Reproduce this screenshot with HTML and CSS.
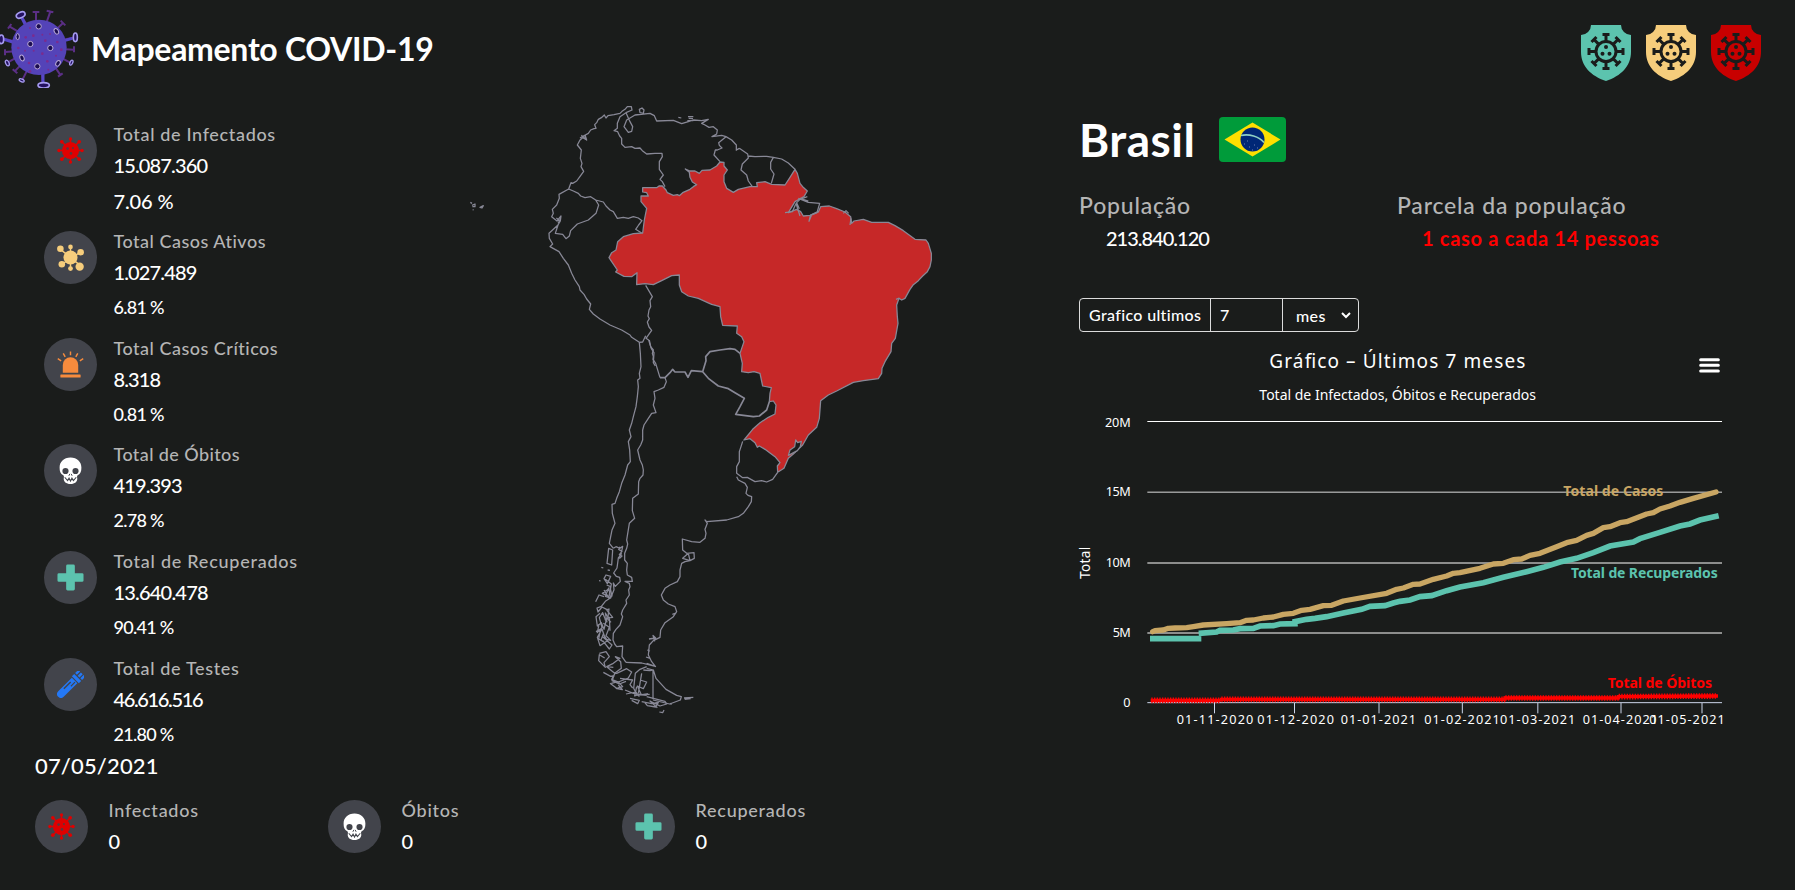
FILE: index.html
```html
<!DOCTYPE html>
<html lang="pt-br">
<head>
<meta charset="utf-8">
<title>Mapeamento COVID-19</title>
<link rel="stylesheet" href="styles.css">
</head>
<body>
<svg class="defs" width="0" height="0">
  <symbol id="i-virus" viewBox="0 0 28 28">
    <g stroke="#e00000" fill="#e00000"><path fill="none" stroke-width="1.5" d="M14 1v26M1 14h26M4.5 4.5l19 19M4.500 23.500l19-19"/><circle cx="14" cy="14" r="8.900" stroke="none"/><g stroke="none"><circle cx="14" cy="2" r="1.700"/><circle cx="14" cy="26" r="1.700"/><circle cx="2" cy="14" r="1.700"/><circle cx="26" cy="14" r="1.700"/><circle cx="5" cy="5" r="1.900"/><circle cx="23" cy="5" r="1.900"/><circle cx="5" cy="23" r="1.900"/><circle cx="23" cy="23" r="1.900"/></g></g>
    <g fill="#5e363c"><circle cx="11" cy="12" r="1.400"/><circle cx="16.500" cy="11.500" r="1.100"/><circle cx="14.500" cy="17" r="1.400"/></g>
  </symbol>
  <symbol id="i-active" viewBox="0 0 28 28">
    <g fill="#f6cd7c" stroke="#f6cd7c" stroke-width="1.500"><path d="M14 3v22M3 5l22 18M25 8L5 21"/><g stroke="none"><circle cx="14" cy="14" r="7.300"/><circle cx="14" cy="3" r="2.400"/><circle cx="14" cy="25.500" r="2.500"/><circle cx="3.500" cy="5" r="3.400"/><circle cx="24.500" cy="8.500" r="3.400"/><circle cx="5" cy="21" r="3.400"/><circle cx="23.500" cy="23.500" r="4.300"/></g></g>
  </symbol>
  <symbol id="i-siren" viewBox="0 0 28 28">
    <g fill="#f78b3d"><path d="M6 22.500v-8a8 8 0 0 1 16 0v8z"/><rect x="3.500" y="24.300" width="21" height="3.200" rx=".6"/></g><path d="M14 .5v4M6.500 2.500l2 3.500M21.500 2.500l-2 3.500M.8 8l3.500 2.200M27.200 8l-3.500 2.200" stroke="#f78b3d" stroke-width="1.500" fill="none"/>
  </symbol>
  <symbol id="i-skull" viewBox="0 0 28 28">
    <path fill="#fff" d="M14 .5C7 .5 2.700 5 2.700 11c0 4 .8 6.500 3.800 8 .8.500.8 1.500.5 3-.4 3.500 2.500 6 7 6s7.400-2.500 7-6c-.3-1.500-.3-2.500.5-3 3-1.500 3.800-4 3.800-8C25.300 5 21 .5 14 .5z"/><g fill="#42444b"><circle cx="8.800" cy="14.500" r="3.200"/><circle cx="19.200" cy="14.500" r="3.200"/><path d="M13.300 17.500l-1 2M14.700 17.500l1 2" stroke="#42444b"/></g><path d="M8 21l3 3.500 1.500-2.500 1.500 3 1.500-3 1.500 2.500L20 21" fill="none" stroke="#42444b" stroke-width="1.100"/>
  </symbol>
  <symbol id="i-plus" viewBox="0 0 28 28"><path fill="#5cc3ae" d="M11 .5h6a1.500 1.500 0 0 1 1.500 1.500v7.500H26a1.500 1.500 0 0 1 1.500 1.500v6a1.500 1.500 0 0 1-1.500 1.500h-7.500V26a1.500 1.500 0 0 1-1.500 1.500h-6A1.500 1.500 0 0 1 9.500 26v-7.500H2A1.500 1.500 0 0 1 .5 17v-6A1.500 1.500 0 0 1 2 9.500h7.500V2A1.500 1.500 0 0 1 11 .5z"/></symbol>
  <symbol id="i-tube" viewBox="0 0 28 28">
    <g transform="rotate(45 14 14)" fill="#2478f5"><path d="M10 8h8v20a4 4 0 0 1-8 0z"/><path d="M9 3.500h10.200V7H9z"/><path d="M9-2.500h2.600v4.700H9zM12.800-2.500h2.600v4.700h-2.600zM16.600-2.500h2.600v4.700h-2.600z"/><path d="M15 9v6h1.200V9zM11.500 12h1.500v10h-1.500z" fill="#42444b"/></g>
  </symbol>
  <symbol id="i-shield" viewBox="0 0 50 56">
    <path fill="currentColor" d="M10 0h30a10 10 0 0 0 10 10v17C50 41 40 51 25 56 10 51 0 41 0 27V10A10 10 0 0 0 10 0z"/>
    <g fill="none" stroke="#1a1c1b" stroke-width="3"><circle cx="25" cy="26.500" r="10"/><path d="M25 16.500v-7M21.500 9.500h7M25 36.500v7M21.500 43.500h7M15 26.500H8M8 23v7M35 26.500h7M42 23v7"/><path transform="rotate(45 25 26.500)" d="M25 16.500v-7M21.500 9.500h7M25 36.500v7M21.500 43.500h7M15 26.500H8M8 23v7M35 26.500h7M42 23v7"/></g>
    <g fill="#1a1c1b"><circle cx="25" cy="22" r="2"/><circle cx="21.500" cy="28.800" r="2"/><circle cx="28.500" cy="28.800" r="2"/></g>
  </symbol>
</svg>

<header class="top">
  <svg class="logo" viewBox="0 0 240 240">
    <g stroke="#5b2f86" stroke-width="6" fill="none"><path d="M120 110L62 22M108 10v90M98 12h20M120 100L152 8M140 8l20 5M120 110L190 44M182 38l14 14M120 110L226 88M125 120l97 5M222 115v18M120 115l96 52M120 110l62 92M174 206l14-10M120 110l8 122M120 110L66 218M120 110L44 190M38 184l14 12M120 110L22 164M110 125l-95 7M15 124v18M120 120L4 90M120 110L28 55M24 62l10-14"/></g>
    <g stroke="#5647c8" stroke-width="9"><path d="M76 50L66 30M193 98l24-7M38 102L12 94M129 190v35"/></g>
    <circle cx="117" cy="118" r="83" fill="#5443b8"/>
    <g fill="#241160" stroke="#a69bf0" stroke-width="5"><ellipse cx="62" cy="21" rx="14" ry="8" transform="rotate(-25 62 21)"/><ellipse cx="226" cy="88" rx="6" ry="13"/><ellipse cx="4" cy="94" rx="7" ry="13"/><ellipse cx="131" cy="232" rx="17" ry="8"/><ellipse cx="22" cy="165" rx="5" ry="9" stroke-width="4" transform="rotate(-25 22 165)"/><ellipse cx="214" cy="164" rx="4" ry="8" stroke-width="4" transform="rotate(25 214 164)"/><ellipse cx="65" cy="217" rx="8" ry="4" stroke-width="4" transform="rotate(25 65 217)"/></g>
    <g fill="#1a0d50" stroke="#b9a8d6" stroke-width="3"><circle cx="116" cy="55" r="8"/><ellipse cx="169" cy="70" rx="6" ry="9" transform="rotate(-30 169 70)"/><ellipse cx="53" cy="86" rx="5" ry="9"/><circle cx="91" cy="108" r="8"/><circle cx="151" cy="120" r="8"/><ellipse cx="66" cy="150" rx="6" ry="9" transform="rotate(-25 66 150)"/><circle cx="112" cy="175" r="8"/><ellipse cx="174" cy="166" rx="6" ry="9" transform="rotate(30 174 166)"/></g>
    <g fill="#7b2b8e"><circle cx="90" cy="60" r="3"/><circle cx="100" cy="83" r="4"/><circle cx="127" cy="80" r="3"/><circle cx="150" cy="78" r="3"/><circle cx="136" cy="98" r="4"/><circle cx="77" cy="88" r="4"/><circle cx="172" cy="102" r="4"/><circle cx="55" cy="120" r="4"/><circle cx="101" cy="128" r="3"/><circle cx="127" cy="137" r="4"/><circle cx="87" cy="165" r="4"/><circle cx="90" cy="190" r="4"/><circle cx="142" cy="160" r="4"/><circle cx="168" cy="143" r="3"/><circle cx="145" cy="185" r="3"/><circle cx="184" cy="125" r="4"/><circle cx="75" cy="128" r="3"/></g>
  </svg>
  <h1>Mapeamento COVID-19</h1>
  <div class="shields">
    <svg class="green"><use href="#i-shield"/></svg>
    <svg class="yellow"><use href="#i-shield"/></svg>
    <svg class="red"><use href="#i-shield"/></svg>
  </div>
</header>

<main class="content">
  <ul class="stats">
    <li class="infected"><span class="badge"><svg><use href="#i-virus"/></svg></span><div><p class="label">Total de Infectados</p><p class="value">15.087.360</p><p class="pct first">7.06 %</p></div></li>
    <li class="active"><span class="badge"><svg><use href="#i-active"/></svg></span><div><p class="label">Total Casos Ativos</p><p class="value">1.027.489</p><p class="pct">6.81 %</p></div></li>
    <li class="critical"><span class="badge"><svg><use href="#i-siren"/></svg></span><div><p class="label">Total Casos Críticos</p><p class="value">8.318</p><p class="pct">0.81 %</p></div></li>
    <li class="deaths"><span class="badge"><svg><use href="#i-skull"/></svg></span><div><p class="label">Total de Óbitos</p><p class="value">419.393</p><p class="pct">2.78 %</p></div></li>
    <li class="recovered"><span class="badge"><svg><use href="#i-plus"/></svg></span><div><p class="label">Total de Recuperados</p><p class="value">13.640.478</p><p class="pct">90.41 %</p></div></li>
    <li class="tests"><span class="badge"><svg><use href="#i-tube"/></svg></span><div><p class="label">Total de Testes</p><p class="value">46.616.516</p><p class="pct">21.80 %</p></div></li>
  </ul>

  <svg class="map" viewBox="0 0 1500 1920">
    <g class="land">
      <!-- Brasil -->
      <path class="sel" d="M548 293L590 293 597 288 607 288 618 300 622 308 640 316 652 314 658 317 668 308 690 298 700 290 710 284 697 276 690 262 688 247 676 237 690 243 705 243 718 250 726 241 750 240 770 228 780 216 792 217 792 228 802 240 792 255 792 275 800 295 820 307 835 298 870 290 892 290 890 278 915 275 935 283 975 285 990 262 1005 238 1012 250 1020 280 1028 290 1042 303 1032 320 1005 335 985 368 1010 358 1022 365 1030 378 1050 376 1075 366 1082 350 1108 348 1130 356 1155 366 1172 380 1175 400 1182 393 1210 388 1235 397 1285 397 1305 407 1330 422 1365 448 1398 450 1405 460 1414 490 1414 510 1410 530 1402 545 1388 558 1375 572 1360 584 1350 598 1335 625 1325 630 1317 625 1310 645 1312 680 1314 700 1306 745 1295 760 1293 785 1275 815 1266 835 1265 850 1255 866 1210 872 1180 877 1130 903 1105 915 1082 932 1078 985 1070 1012 1045 1035 1028 1065 1000 1092 985 1105 972 1135 953 1147 952 1128 960 1118 945 1100 915 1078 898 1068 892 1072 885 1058 870 1046 852 1050 878 1018 900 998 925 982 945 972 948 945 940 933 928 935 930 910 934 893 908 888 900 850 882 845 865 848 845 845 847 820 840 790 852 755 845 740 830 730 832 708 788 706 782 680 780 650 755 643 748 640 715 625 685 618 665 605 658 585 658 555 635 557 605 572 580 584 555 581 530 584 531 548 515 560 492 559 467 546 472 540 455 515 447 503 455 488 468 480 473 455 490 440 520 431 548 429 553 390 560 355 543 335 543 318 565 318 560 308 548 306z"/>
      <path d="M1042 320L1020 328 1008 340 1020 378M1015 325l30 12 34 3-8 28-20 8-4 18 8-20 20-10M975 368l22-3 10-22M1010 338l8 18M1020 325l25 8M1150 370l8-8 8 8M1170 405l3-20M1308 628l10-4"/>
      <path class="lagoon" d="M985 1096L990 1080 1004 1070 1007 1050 1013 1058 1024 1054 1021 1070 1012 1082z"/>
      <!-- Colômbia, Venezuela e Guianas -->
      <path d="M326 297L333 278 338 280 350 273 358 262 371 244 363 230 366 220 361 205 364 180 352 165 360 150 368 143 378 148 376 135 385 130 392 120 402 116 408 115 404 104 410 98 415 88 424 83 433 75 438 84 444 77 462 74 480 70 486 64 495 58 502 50 514 50 516 60 498 68 480 80 472 100 472 115 462 122 473 125 479 138 485 145 485 162 495 172 515 170 525 175 540 174 547 182 560 192 585 190 606 190 607 200 598 215 598 238 610 255 600 268 607 275 615 290"/>
      <path d="M364 136l16 14-6-14-14 8M498 68L510 95 518 110 515 124 505 127 492 110 500 90 525 75 570 70 583 77 590 93 640 91 665 101 685 95 700 90 725 92 745 88 725 100 735 105 747 112 760 110 772 120 770 132 756 140 785 136 798 140 815 150 829 165 829 182M838 175l25 17 2 12-18 18 -4 18 17 15 5 18 12 17M829 180l9-5M865 198l20 2 35-1 20 3 25 5 20 12 20 19M940 202l-8 15 0 20 10 15-8 28M798 140l-22 18 2 8 8 8-14 6-6 0-4 15 18 20M538 58l8-4 6 6-2 10-10-2zM655 82l9 2M684 80l16 0M686 85l13 1M682 92l18 0"/>
      <!-- Equador e Peru -->
      <path d="M326 297L297 313 298 325 290 345 277 358 280 370 275 380 291 393 303 378 301 393 294 405 286 430 308 433 318 446 328 438 332 422 352 402 385 390 408 370 416 345 407 330 392 320 375 323 362 318 355 310 340 303 326 297M407 330L430 336 438 348 450 360 460 365 472 385 490 382 505 385 520 380 535 384 546 392 536 405 527 418 545 429M294 405L267 430 268 445 278 462 270 470 297 485 310 505 325 525 335 550 345 570 358 590 360 600 372 613 380 627 392 642 388 658 400 672 420 687 450 705 485 720 510 735 515 742 538 757 548 756 557 737M557 586l20 34-7 12 2 18-5 10 -3 18 4 8-6 10 5 15 8 10-17 24 8 5 8 26 8 12-2 30 6 10M289 393l11-3-6 10M289 384l12 8"/>
      <!-- Bolívia, Paraguai e Uruguai -->
      <path class="thick" d="M600 863L615 863 630 848 638 838 645 846 675 846 684 862 694 842 728 845 738 812 737 800 750 785 780 780 810 776 825 778 840 790M728 845L745 865 775 888 805 896 825 908 853 925 840 950 827 973 880 980 898 978 920 960 928 935"/>
      <path d="M568 750L572 770 580 780 577 790 580 800 579 808 587 820 600 863M848 1054L843 1070 838 1085 838 1115 830 1130 830 1150 848 1163 862 1162 885 1175 905 1172 920 1176 938 1168 953 1147"/>
      <!-- Chile -->
      <path d="M538 757L541 790 543 830 538 850 540 865 533 870 535 890 532 920 528 950 520 980 515 1000 508 1020 513 1040 505 1055 509 1080 511 1115 503 1125 495 1155 485 1180 478 1205 470 1225 465 1240 456 1243 457 1270 465 1300 456 1320 452 1340 448 1360 460 1375M615 863L619 875 612 892 595 900 582 905 585 925 580 945 588 968 575 970 565 985 552 1005 548 1020 548 1050 542 1065 533 1080 540 1110 547 1125 550 1140 549 1155 540 1165 536 1175 535 1212 518 1225 517 1262 524 1285 508 1300 500 1350 503 1362 500 1375 494 1390 494 1410 502 1420 500 1440 502 1455 515 1462 517 1474 495 1474 508 1480 510 1490 506 1500 508 1515 498 1530 500 1540 488 1560 484 1572 488 1580 480 1605 468 1618 460 1630 459 1650 464 1662 470 1670 488 1668 486 1700 498 1717"/>
      <!-- costa argentina -->
      <path d="M830 1160L835 1170 855 1180 862 1192 858 1210 864 1216 875 1220 874 1235 865 1250 850 1270 835 1280 800 1290 740 1295 735 1290 742 1300 735 1318 738 1330 735 1345 720 1357 695 1355 667 1347 668 1380 680 1390 702 1388 703 1405 690 1412 668 1405 685 1390 690 1412 675 1415 665 1420 660 1440 660 1460 652 1475 630 1485 615 1495 604 1515 610 1530 625 1542 645 1550 650 1565 640 1580 615 1598 602 1620 600 1642 580 1652 568 1665 565 1695 575 1715 586 1729 565 1724 545 1719 498 1717M567 1647l20-3-8-8 5 18M560 1720l28 10M645 1570l-8 3M558 1701l12 4M562 1680l8 3"/>
      <!-- Patagônia e Terra do Fogo -->
      <path d="M579 1742V1828M560 1730l-20 8-14 12-5 45 10 20 38-2M550 1740l20 2 10-2 8 25 30 33 32 18 14 4-3 10-32 12-50-12M672 1824l28-2M674 1828l18-2M560 1735l20 5M540 1770l20 6-10 20 -18-8 12 26 20-2M545 1750l-10 60M460 1375l8-5 12 5 8-6-5 25-8 10-4 30-10 15 8 10 10 3 2 12-15 15-6-10 2 20-10 25-6-30-10 25 15 5-15 10-12 15-13 5 3 12 12-15 15 8 6-2-4 30 10 10M480 1370l-4 8 10 6-8 10 8 4-8 8"/>
      <path d="M446 1375l12 5-3 45-14-5zM424 1432l6 2M443 1440l7 1M417 1472l5 1M438 1455l14 4-10 22-10-15zM440 1485l12 5-5 30-20-10 18-12M407 1535l10-20 15 5M420 1570l-12 10 4 28 12-10 8 20 6-25-10-25 -10 15 8 30-14 15 5-25M440 1560l18 22-12 2-10-15 5 28M430 1600l18 12-10 25 14 14-16-4-10-30-14 25 8 25 22-15-12-20-8 20M428 1640l28 25-8 12-20-25M418 1690l20-5 10 15-16 18 4 14-20-20 2-18 16 10M440 1730l20-10 20-15-14-5 16 15 2 20-20 15-24-20 20 2M436 1468l18 14-4 24M432 1500l16 26M450 1490l6 30M434 1590l14 -8 2 40M408 1625l14-8-6 30 14 8"/>
      <path d="M430 1747l22 12 10-2-6 15 22 10 20-8M470 1750l30-14 15 10-10 18-30 12-20-8 10-18zM450 1780l20 15 18-5-14-15-20 5M480 1765l38 5-8 14 8 10M495 1800l25 10 40 6M510 1825l28 6-5 10-18-10M545 1835l30 6 20-4-8 14-25-4-8-10M560 1820l55 14 5 8-20 6-30-15 22 20M630 1840l5 3M598 1866l10 2 4-8M475 1785l12 14-20-4M498 1812l30-6 10 14M530 1790l-6 28 16-6"/>
      <!-- Galápagos -->
      <path d="M31 337l5 3M36 346l9-4 0 8-8 0M38 359l3 1M60 352l10-5-4 7z"/>
    </g>
  </svg>

  <section class="country">
    <div class="name"><h2>Brasil</h2>
      <svg class="flag" viewBox="0 0 67 45"><rect width="67" height="45" rx="4" fill="#009b3a"/><path d="M5.500 22.500L33.500 5.500 61.500 22.500 33.500 39.500z" fill="#fedf00"/><circle cx="33.500" cy="22.500" r="12" fill="#002776"/><path d="M22 18.500c8-2 18 1 23 7" stroke="#8fd0c4" stroke-width="1.600" fill="none"/><path d="M25 27l1 0M30 30l1 0M35 28l1 0M33 33l1 0M38 31l1 0M28 24l1 0" stroke="#6b7fb3"/></svg>
    </div>
    <div class="facts">
      <div><p class="fact-label">População</p><p class="fact-value num">213.840.120</p></div>
      <div><p class="fact-label">Parcela da população</p><p class="fact-value danger">1 caso a cada 14 pessoas</p></div>
    </div>
    <div class="picker"><span class="p-label">Grafico ultimos</span><span class="p-num">7</span><span class="p-unit">mes<svg viewBox="0 0 10 7"><path d="M1 1l4 4 4-4" fill="none" stroke="#fff" stroke-width="2"/></svg></span></div>
    <svg class="chart" viewBox="0 0 2100 1200">
      <text x="628" y="84" font-size="57" textLength="768">Gráfico – Últimos 7 meses</text>
      <text x="598" y="180" font-size="42" textLength="830">Total de Infectados, Óbitos e Recuperados</text>
      <path d="M1922 59h53M1922 76h53M1922 93h53" stroke="#fff" stroke-width="9" stroke-linecap="round"/>
      <g class="y"><text x="135" y="260" textLength="77">20M</text><text x="137" y="468" textLength="75">15M</text><text x="137" y="681" textLength="75">10M</text><text x="158" y="891" textLength="54">5M</text><text x="190" y="1101">0</text></g>
      <text transform="translate(91 717) rotate(-90)" font-size="41" textLength="97">Total</text>
      <g fill="none" stroke-width="3" stroke="#fff"><path d="M262 244.500H1986"/><path d="M262 456.500H1986" stroke="#ddd"/><path d="M262 669H1986"/><path d="M262 879H1986"/></g>
      <path fill="none" stroke="#ccd6eb" stroke-width="3" d="M262 1088H1986M463.500 1089v31M703.500 1089v31M957 1089v31M1207 1089v31M1433.500 1089v31M1683 1089v31M1926 1089v31"/>
      <g class="x"><text x="350" y="1153" textLength="230">01-11-2020</text><text x="592" y="1153" textLength="230">01-12-2020</text><text x="842" y="1153" textLength="226">01-01-2021</text><text x="1093" y="1153" textLength="226">01-02-2021</text><text x="1320" y="1153" textLength="226">01-03-2021</text><text x="1568" y="1153" textLength="226">01-04-2021</text><text x="1768" y="1153" textLength="226">01-05-2021</text></g>
      <g fill="none" stroke-linejoin="round">
        <path stroke="#c9a663" stroke-width="16" stroke-linecap="round" d="M278 875L285 872 310 870 325 865 345 864 380 863 400 860 430 855 500 851 540 848 560 841 580 840 610 834 640 831 670 823 700 820 725 811 750 808 790 797 815 796 850 783 900 774 980 760 1010 748 1030 744 1060 733 1080 732 1120 718 1160 708 1180 700 1200 698 1260 685 1300 672 1330 670 1360 659 1385 657 1410 646 1440 640 1490 620 1520 608 1550 601 1580 586 1600 580 1630 563 1650 560 1680 548 1700 545 1760 522 1780 518 1800 507 1830 498 1860 487 1900 475 1968 456"/>
        <path stroke="#5cc3ae" stroke-width="17" stroke-linejoin="miter" d="M270 896H424M416 880L470 876 480 871 520 870 540 866 580 865 600 858 640 857 660 852 705 851 705 845 740 838 765 835 800 830 850 819 905 808 930 799 975 797 1000 789 1020 784 1050 780 1080 770 1115 767 1160 752 1200 741 1270 728 1330 712 1400 695 1450 682 1500 666 1550 655 1600 638 1650 618 1720 606 1740 596 1800 577 1860 558 1890 552 1920 540 1976 527"/>
        <g stroke="#f00"><path stroke-width="10" d="M272 1081H482M480 1078H1336M1330 1074H1676M1670 1070L1974 1068"/><path stroke-width="17" stroke-dasharray="4 4" d="M274 1081H482M484 1078H1336M1336 1074H1676M1676 1070L1972 1068"/></g>
      </g>
      <g class="series"><text class="cases" x="1510" y="467" textLength="300">Total de Casos</text><text class="recov" x="1533" y="713" textLength="440">Total de Recuperados</text><text class="dead" x="1643" y="1043" textLength="313">Total de Óbitos</text></g>
    </svg>
  </section>
</main>

<section class="daily">
  <p class="date">07/05/2021</p>
  <ul>
    <li><span class="badge"><svg><use href="#i-virus"/></svg></span><div><p class="label">Infectados</p><p class="value">0</p></div></li>
    <li><span class="badge"><svg><use href="#i-skull"/></svg></span><div><p class="label">Óbitos</p><p class="value">0</p></div></li>
    <li><span class="badge"><svg><use href="#i-plus"/></svg></span><div><p class="label">Recuperados</p><p class="value">0</p></div></li>
  </ul>
</section>
</body>
</html>
```
FILE: styles.css
```css
* { box-sizing: border-box; }
body { margin: 0; height: 890px; overflow: hidden; background: #1a1c1b; color: #fff; font-family: Lato, "Noto Sans", sans-serif; font-weight: 500; }
h1, h2, p, ul { margin: 0; padding: 0; list-style: none; white-space: nowrap; }
svg { display: block; }
.defs { position: absolute; }

.top { display: flex; align-items: flex-start; height: 90px; padding-top: 8px; }
.logo { width: 80px; height: 80px; }
.top h1 { margin: 17px 0 0 11px; font-size: 32px; line-height: 48px; font-weight: 700; letter-spacing: -.3px; }
.shields { display: flex; gap: 15px; margin: 17px 34px 0 auto; }
.shields svg { width: 50px; height: 56px; }
.green { color: #5cc3ae; }
.yellow { color: #f6cd7c; }
.red { color: #c80000; }

.content { display: grid; grid-template-columns: 460px 500px 1fr; height: 660px; }
.stats { padding: 30px 0 0 44px; }
.stats li { display: flex; gap: 16.500px; height: 106.800px; }
.badge { display: grid; place-items: center; flex: none; width: 53px; height: 53px; border-radius: 50%; background: #42444b; }
.badge svg { width: 27px; height: 27px; }
.stats .badge { margin-top: 4px; }
.label { color: #b5b5b5; font-size: 18px; line-height: 28px; letter-spacing: .65px; }
.value { font-size: 20px; line-height: 34px; letter-spacing: -.85px; }
.pct { font-size: 18px; line-height: 37px; letter-spacing: -.7px; }
.pct.first { font-size: 20px; line-height: 38px; letter-spacing: -.1px; }
.active .label, .critical .label { letter-spacing: .5px; }
.deaths .label { letter-spacing: .4px; }
.recovered .label { letter-spacing: .75px; }
.recovered .value { letter-spacing: -.8px; }
.tests .value { letter-spacing: -1.350px; }

.map { width: 500px; height: 640px; }
.land path { fill: none; stroke: #888896; stroke-width: 3.800; stroke-linejoin: round; }
.land .thick { stroke-width: 5; }
.land .sel { fill: #c62828; }
.land .lagoon { fill: #1a1c1b; }

.country { padding: 17px 0 0 119px; }
.name { display: flex; align-items: flex-start; height: 100px; }
.name h2 { width: 140px; font-size: 46px; line-height: 66px; font-weight: 700; letter-spacing: .5px; }
.flag { width: 67px; height: 45px; margin-top: 10px; }
.facts { display: grid; grid-template-columns: 318px 1fr; height: 91px; margin-top: -18px; }
.fact-label { color: #b5b5b5; font-size: 23px; line-height: 32px; letter-spacing: .8px; }
.fact-value { padding-left: 27px; font-size: 20px; line-height: 34px; letter-spacing: -1px; }
.fact-value.danger { padding-left: 25px; color: #f00; font-weight: 700; letter-spacing: .7px; }
.picker { display: flex; width: 280px; height: 34px; margin-top: 18px; border: 1px solid #dcdcdc; border-radius: 4px; font-size: 16px; line-height: 31px; letter-spacing: .35px; }
.picker span { padding-left: 9px; }
.p-label { width: 130px; }
.p-num { width: 73px; border: solid #dcdcdc; border-width: 0 1px; }
.p-unit { display: flex; align-items: center; flex: 1; }
.picker .p-unit { padding-left: 13px; }
.p-unit svg { width: 10px; height: 7px; margin-left: 15px; }
.chart { width: 700px; height: 400px; margin: 8px 0 0 -19px; }
.chart text { font-family: "Noto Sans", sans-serif; font-weight: 400; fill: #fff; }
.y text { font-size: 38px; }
.x text { font-size: 38px; }
.chart .series text { font-size: 42px; font-weight: 700; }
.chart .cases { fill: #c9a663; }
.chart .recov { fill: #5cc3ae; }
.chart .dead { fill: #f00; }

.daily { padding-left: 35px; }
.date { font-size: 22px; line-height: 32px; letter-spacing: .15px; }
.daily ul { display: grid; grid-template-columns: 293px 294px 1fr; margin-top: 14px; }
.daily li { display: flex; gap: 20.500px; }
.daily .badge { margin-top: 4px; }
.daily .label { letter-spacing: .75px; }
```
